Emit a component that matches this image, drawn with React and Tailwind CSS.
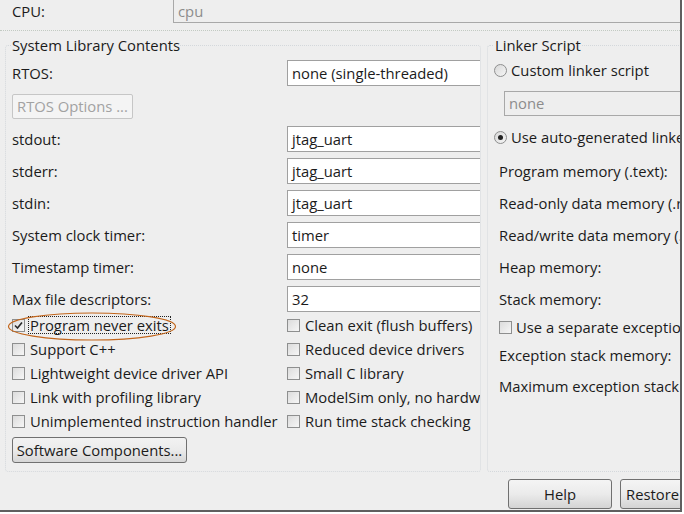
import React from 'react'

const FONT = { fontFamily: '"Open Sans", "Noto Sans", sans-serif' }

function Box({ checked }) {
  return (
    <span className="w-[13px] h-[13px] shrink-0 border border-[#8e8f8f] bg-gradient-to-br from-[#dcdcdc] to-[#f6f6f6] flex items-center justify-center">
      {checked && (
        <svg width="9" height="9" viewBox="0 0 9 9">
          <path d="M1 4.5 L3.5 7 L8 1.5" fill="none" stroke="#2a2a2a" strokeWidth="1.6" />
        </svg>
      )}
    </span>
  )
}

function Radio({ checked }) {
  return (
    <span className="w-[13px] h-[13px] shrink-0 rounded-full border border-[#8e8f8f] bg-gradient-to-br from-[#d8d8d8] to-[#f6f6f6] flex items-center justify-center">
      {checked && <span className="w-[5px] h-[5px] rounded-full bg-[#222]" />}
    </span>
  )
}

function Check({ label, checked, focus }) {
  return (
    <div className="h-[24px] flex items-center gap-[3px] whitespace-nowrap">
      <Box checked={checked} />
      <span className={focus ? 'border border-dotted border-[#222] px-[1px] leading-[16px]' : 'pl-[2px]'}>{label}</span>
    </div>
  )
}

function Field({ label, value }) {
  return (
    <div className="h-[26px] flex items-center">
      <span className="w-[275px] shrink-0">{label}</span>
      <div className="w-[220px] h-[26px] shrink-0 bg-white border border-[#a0a0a0] flex items-center pl-[4px]">{value}</div>
    </div>
  )
}

const fields = [
  ['stdout:', 'jtag_uart'],
  ['stderr:', 'jtag_uart'],
  ['stdin:', 'jtag_uart'],
  ['System clock timer:', 'timer'],
  ['Timestamp timer:', 'none'],
  ['Max file descriptors:', '32'],
]

const checks = [
  ['Program never exits', 'Clean exit (flush buffers)'],
  ['Support C++', 'Reduced device drivers'],
  ['Lightweight device driver API', 'Small C library'],
  ['Link with profiling library', 'ModelSim only, no hardware support'],
  ['Unimplemented instruction handler', 'Run time stack checking'],
]

const memRows = [
  'Program memory (.text):',
  'Read-only data memory (.rodata):',
  'Read/write data memory (.rwdata):',
  'Heap memory:',
  'Stack memory:',
]

export default function App() {
  return (
    <div className="relative w-[684px] h-[514px] bg-white overflow-hidden text-[14.8px] text-[#1b1b1b]" style={FONT}>
      <div className="w-[682px] h-[512px] border-r-2 border-b-2 border-[#5f5f5f] bg-[#eeeeee] flex flex-col overflow-hidden">
        {/* CPU row */}
        <div className="h-[23px] flex shrink-0">
          <span className="w-[173px] pl-[12px] flex items-center">CPU:</span>
          <div className="flex-1 border-l border-b border-[#a8a8a8] text-[#8c8c8c] pl-[4px] flex items-center">cpu</div>
        </div>
        <div className="mt-[7px] border-t border-dotted border-[#c2cac2]" />

        <div className="mt-[4px] flex items-start">
          {/* System Library Contents */}
          <fieldset className="ml-[5px] w-[476px] min-w-0 h-[437px] shrink-0 border border-dotted border-[#d4d8dc] rounded-[3px] pl-[6px] overflow-hidden">
            <legend className="leading-[20px]">System Library Contents</legend>
            <div className="mt-[5px] h-[26px] flex items-center">
              <span className="w-[275px] shrink-0">RTOS:</span>
              <div className="w-[220px] h-[26px] shrink-0 bg-white border border-[#a0a0a0] flex items-center pl-[4px]">none (single-threaded)</div>
            </div>
            <button className="mt-[8px] w-[121px] h-[25px] border border-[#c6c6c6] rounded-[2px] bg-[#f4f4f4] text-[#a2a2a2] text-left pl-[4px] flex items-center whitespace-nowrap">
              RTOS Options ...
            </button>
            <div className="mt-[7px] flex flex-col gap-[6px]">
              {fields.map(([l, v]) => (
                <Field key={l} label={l} value={v} />
              ))}
            </div>
            <div className="mt-[1px] flex flex-col">
              {checks.map(([a, b], i) => (
                <div key={a} className="flex">
                  <div className="w-[275px] shrink-0">
                    <Check label={a} checked={i === 0} focus={i === 0} />
                  </div>
                  <div className="shrink-0">
                    <Check label={b} />
                  </div>
                </div>
              ))}
            </div>
            <button className="mt-[4px] w-[175px] h-[26px] border border-[#707070] rounded-[3px] bg-gradient-to-b from-[#f2f2f2] via-[#ebebeb] to-[#d6d6d6] flex items-center justify-center whitespace-nowrap">
              Software Components...
            </button>
          </fieldset>

          {/* Linker Script */}
          <fieldset className="ml-[6px] w-[200px] min-w-0 h-[437px] shrink-0 border border-dotted border-[#d4d8dc] border-r-0 rounded-l-[3px] pl-[6px] overflow-hidden whitespace-nowrap">
            <legend className="leading-[20px] pl-[1px]">Linker Script</legend>
            <div className="mt-[3px] h-[24px] flex items-center gap-[4px]">
              <Radio />
              <span>Custom linker script</span>
            </div>
            <div className="mt-[9px] ml-[10px] w-[200px] h-[25px] border border-[#a8a8a8] text-[#8c8c8c] pl-[4px] flex items-center">none</div>
            <div className="mt-[9px] h-[24px] flex items-center gap-[4px]">
              <Radio checked />
              <span>Use auto-generated linker script</span>
            </div>
            <div className="mt-[6px] pl-[5px] flex flex-col">
              {memRows.map((r) => (
                <div key={r} className="h-[32px] flex items-center">{r}</div>
              ))}
              <div className="h-[24px] flex items-center gap-[4px]">
                <Box />
                <span>Use a separate exception stack</span>
              </div>
              <div className="h-[32px] flex items-center">Exception stack memory:</div>
              <div className="h-[30px] flex items-center">Maximum exception stack size:</div>
            </div>
          </fieldset>
        </div>

        {/* Bottom buttons */}
        <div className="mt-[7px] pl-[508px] flex gap-[8px] shrink-0">
          <button className="w-[104px] h-[30px] shrink-0 border border-[#707070] rounded-[3px] bg-gradient-to-b from-[#f4f4f4] via-[#ebebeb] to-[#d4d4d4] flex items-center justify-center">
            Help
          </button>
          <button className="w-[130px] h-[30px] shrink-0 border border-[#707070] rounded-[3px] bg-gradient-to-b from-[#f4f4f4] via-[#ebebeb] to-[#d4d4d4] flex items-center pl-[5px] whitespace-nowrap">
            Restore Defaults
          </button>
        </div>
      </div>

      {/* annotation ellipse */}
      <svg className="absolute left-[7px] top-[311px]" width="170" height="31" viewBox="0 0 170 31">
        <ellipse cx="85" cy="15.5" rx="83.5" ry="13.5" fill="none" stroke="#c2661c" strokeWidth="1.2" />
      </svg>
    </div>
  )
}
